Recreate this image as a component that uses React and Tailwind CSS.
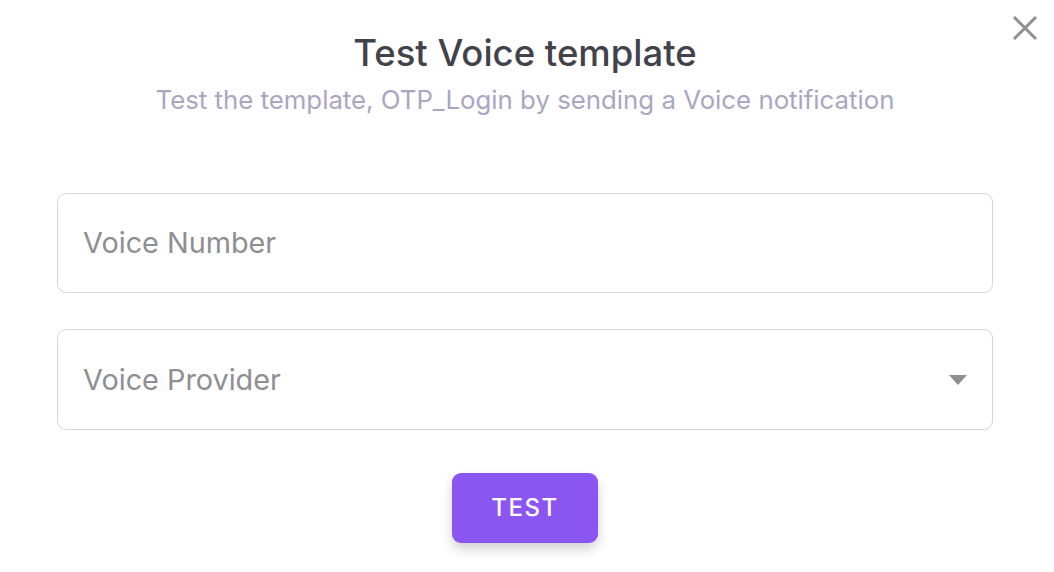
function CloseIcon() {
  return (
    <svg width="26" height="26" viewBox="0 0 26 26" className="text-[#8e8e93]">
      <path d="M2 2L24 24M24 2L2 24" stroke="currentColor" strokeWidth="3" strokeLinecap="butt" />
    </svg>
  );
}

export default function App() {
  return (
    <div
      className="w-[1054px] h-[572px] bg-white relative"
      style={{ fontFamily: "Inter, 'Noto Sans', sans-serif" }}
    >
      {/* CLOSE */}
      <button className="absolute top-[15px] right-[16px]">
        <CloseIcon />
      </button>

      <div className="flex flex-col items-center pt-[30px] pr-[4px]">
        <h1 className="text-[36.5px] leading-[46px] font-medium text-[#42424c]">
          Test Voice template
        </h1>
        <p className="text-[25.8px] leading-[30px] text-[#aaa6c2] mt-[9px]">
          Test the template, OTP_Login by sending a Voice notification
        </p>
      </div>

      {/* FORM */}
      <div className="flex flex-col gap-[36px] pl-[57px] pr-[61px] mt-[78px]">
        <div className="h-[100px] border border-[#d6d6d8] rounded-[9px] flex items-center px-[25px]">
          <span className="text-[28.8px] text-[#8e8e93]">Voice Number</span>
        </div>
        <div className="h-[101px] border border-[#d6d6d8] rounded-[9px] flex items-center justify-between pl-[25px] pr-[24px]">
          <span className="text-[28.8px] text-[#8e8e93]">Voice Provider</span>
          <svg width="20" height="12" viewBox="0 0 20 12">
            <path d="M1 1H19L10 11Z" fill="#8e8e93" />
          </svg>
        </div>
      </div>

      <div className="flex justify-center mt-[43px] pr-[4px]">
        <button className="w-[146px] h-[70px] rounded-[9px] bg-[#8b55f2] text-white text-[24px] font-medium tracking-[1.5px] shadow-[0_6px_12px_rgba(0,0,0,0.18)]">
          TEST
        </button>
      </div>
    </div>
  );
}
